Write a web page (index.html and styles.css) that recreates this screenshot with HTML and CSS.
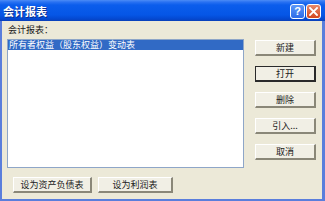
FILE: index.html
```html
<!DOCTYPE html>
<html>
<head>
<meta charset="utf-8">
<title>会计报表</title>
<link rel="stylesheet" href="styles.css">
</head>
<body>
<div class="window">
  <div class="titlebar">
    <span class="title">会计报表</span>
    <div class="caption-buttons">
      <span class="cap help">?</span>
      <span class="cap close">
        <svg width="9" height="9" viewBox="0 0 9 9"><path d="M1 1 L8 8 M8 1 L1 8" stroke="#fff" stroke-width="1.8" stroke-linecap="square"/></svg>
      </span>
    </div>
  </div>
  <div class="body">
    <div class="main">
      <div class="left">
        <div class="label">会计报表：</div>
        <div class="list">
          <div class="item selected">所有者权益（股东权益）变动表</div>
        </div>
      </div>
      <div class="right">
        <button class="btn">新建</button>
        <button class="btn default">打开</button>
        <button class="btn">删除</button>
        <button class="btn">引入...</button>
        <button class="btn">取消</button>
      </div>
    </div>
    <div class="bottom">
      <button class="btn wide1">设为资产负债表</button>
      <button class="btn wide2">设为利润表</button>
    </div>
  </div>
</div>
</body>
</html>
```
FILE: styles.css
```css
html, body {
  margin: 0;
  padding: 0;
  background: #ECE9D8;
}
.window {
  width: 325px;
  height: 201px;
  box-sizing: border-box;
  display: flex;
  flex-direction: column;
  background: #ECE9D8;
  border-left: 2px solid #5A7EDC;
  border-right: 3px solid #5A7EDC;
  border-bottom: 2px solid #5A7EDC;
  font-family: "Noto Sans CJK SC", "Noto Sans", sans-serif;
  font-size: 9px;
  color: #1a1a1a;
}
.titlebar {
  height: 21px;
  margin: 0 -3px 0 -2px;
  display: flex;
  align-items: center;
  justify-content: space-between;
  background: linear-gradient(to bottom, #4C8CF6 0px, #2A72F2 2px, #0B5DEC 5px, #0556E6 15px, #0448D0 19px, #0A3FB8 21px);
}
.title {
  color: #fff;
  font-weight: bold;
  font-size: 11px;
  line-height: 11px;
  padding-left: 3px;
  padding-top: 1px;
  text-shadow: 1px 1px 0 #0A2E8C;
}
.caption-buttons {
  display: flex;
  gap: 1px;
  padding-right: 4px;
  padding-top: 1px;
}
.cap {
  width: 15px;
  height: 15px;
  box-sizing: border-box;
  border: 1px solid #fff;
  border-radius: 3px;
  display: flex;
  align-items: center;
  justify-content: center;
}
.help {
  background: linear-gradient(to bottom, #5E98F8, #2C6BE8);
  color: #fff;
  font-family: "Liberation Sans", sans-serif;
  font-weight: bold;
  font-size: 11px;
  line-height: 11px;
}
.close {
  background: linear-gradient(to bottom, #E88A6C, #D2461E);
}
.body {
  flex: 1;
  display: flex;
  flex-direction: column;
  padding: 2px 0 0 5px;
}
.main {
  display: flex;
  align-items: flex-start;
}
.left {
  display: flex;
  flex-direction: column;
}
.label {
  line-height: 14px;
  height: 14px;
  padding-left: 1px;
  margin-bottom: 2px;
}
.list {
  width: 237px;
  height: 129px;
  box-sizing: border-box;
  background: #fff;
  border: 1px solid #8EA6C8;
}
.item {
  height: 10px;
  line-height: 10px;
  padding-left: 1px;
  white-space: nowrap;
}
.item.selected {
  background: #316AC5;
  color: #fff;
}
.right {
  display: flex;
  flex-direction: column;
  gap: 10px;
  margin-left: 11px;
  margin-top: 17px;
}
.btn {
  width: 61px;
  height: 16px;
  box-sizing: border-box;
  padding: 0;
  margin: 0;
  font-family: "Noto Sans CJK SC", "Noto Sans", sans-serif;
  font-size: 9px;
  line-height: 12px;
  color: #1a1a1a;
  background: #F1EFE5;
  border-top: 1px solid #fff;
  border-left: 1px solid #fff;
  border-right: 2px solid #8A8778;
  border-bottom: 2px solid #8A8778;
}
.btn.default {
  border: 1px solid #2a2a2a;
  border-right-width: 2px;
  border-bottom-width: 2px;
}
.bottom {
  display: flex;
  gap: 6px;
  margin-top: 9px;
  padding-left: 6px;
}
.btn.wide1 {
  width: 79px;
}
.btn.wide2 {
  width: 75px;
}
```
